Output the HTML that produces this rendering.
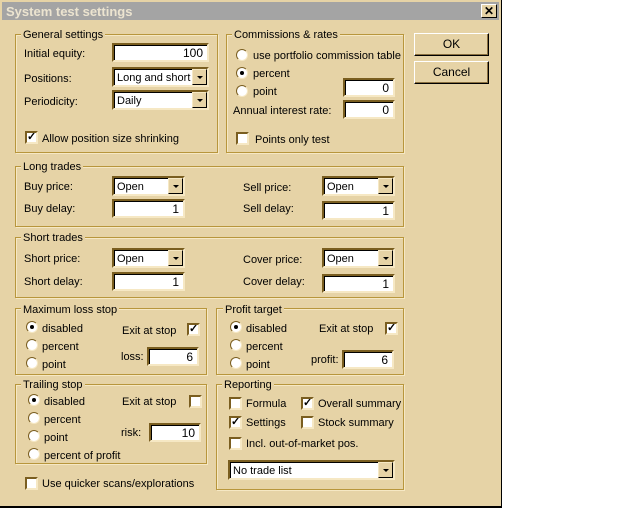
<!DOCTYPE html>
<html><head><style>
*{margin:0;padding:0;box-sizing:border-box}
body{width:640px;height:508px;background:#fff;position:relative;overflow:hidden;font-family:"Liberation Sans",sans-serif;font-size:11px;color:#000}
#win{position:absolute;left:0;top:0;width:502px;height:508px;background:#e6d3a6;border-right:1px solid #000;border-bottom:2px solid #000}
#title{position:absolute;left:2px;top:2px;width:497px;height:18px;background:#a4a4a4;color:#ece4d0;font-weight:bold;font-size:13px;padding:2px 0 0 4px}
#close{position:absolute;left:481px;top:4px;width:16px;height:14px;background:#e6d3a6;border:1px solid;border-color:#fff #000 #000 #fff;font-size:12px;font-weight:bold;text-align:center;line-height:12px}
.g{position:absolute;border:1px solid #b8963c;box-shadow:1px 1px 0 #f6e8c4, inset 1px 1px 0 #f6e8c4}
.gl{position:absolute;background:#e6d3a6;padding:1px 2px 0;line-height:14px}
.t{position:absolute;white-space:nowrap;line-height:14px;padding-top:1px}
.in{position:absolute;background:#fff;border:2px solid;border-color:#7a5e20 #f6e8c4 #f6e8c4 #7a5e20;box-shadow:inset 1px 1px 0 #000;text-align:right;padding-right:4px;line-height:14px;padding-top:1px;font-size:12px}
.cb{position:absolute;background:#fff;border:2px solid;border-color:#7a5e20 #f6e8c4 #f6e8c4 #7a5e20;box-shadow:inset 1px 1px 0 #000;padding-left:3px;line-height:14px;padding-top:2px;font-size:11px;white-space:nowrap;overflow:hidden}
.cb i{position:absolute;right:0;top:0;width:15px;height:100%;background:#e6d3a6;border:1px solid;border-color:#f6e8c4 #000 #000 #f6e8c4}
.cb i:after{content:"";position:absolute;left:4px;top:6px;border:3px solid transparent;border-top:3px solid #000;border-bottom:0}
.r{position:absolute;width:12px;height:12px;border-radius:50%;background:#fff;border:1px solid;border-color:#7a5e20 #f6e8c4 #f6e8c4 #7a5e20}
.r.on:after{content:"";position:absolute;left:3px;top:3px;width:4px;height:4px;border-radius:50%;background:#000}
.c{position:absolute;width:13px;height:13px;background:#fff;border:2px solid;border-color:#7a5e20 #f6e8c4 #f6e8c4 #7a5e20;font-size:11px;line-height:9px;text-align:center;font-weight:bold}
.b{position:absolute;width:75px;height:23px;border:1px solid;border-color:#fff #000 #000 #fff;box-shadow:inset -1px -1px 0 #8a7040;text-align:center;line-height:21px;font-size:12px}
</style></head><body>
<div id="win">
<div id="title">System test settings</div>
<div id="close">✕</div>

<div class="g" style="left:15px;top:34px;width:203px;height:119px"></div>
<div class="gl" style="left:21px;top:27px">General settings</div>
<div class="t" style="left:24px;top:46px">Initial equity:</div>
<div class="in" style="left:112px;top:43px;width:97px;height:19px">100</div>
<div class="t" style="left:24px;top:71px">Positions:</div>
<div class="cb" style="left:112px;top:67px;width:97px;height:20px">Long and short<i></i></div>
<div class="t" style="left:24px;top:94px">Periodicity:</div>
<div class="cb" style="left:112px;top:90px;width:97px;height:20px">Daily<i></i></div>
<div class="c" style="left:25px;top:131px">✓</div>
<div class="t" style="left:42px;top:131px">Allow position size shrinking</div>

<div class="g" style="left:226px;top:34px;width:178px;height:119px"></div>
<div class="gl" style="left:232px;top:27px">Commissions &amp; rates</div>
<div class="r" style="left:236px;top:49px"></div><div class="t" style="left:253px;top:48px">use portfolio commission table</div>
<div class="r on" style="left:236px;top:67px"></div><div class="t" style="left:253px;top:66px">percent</div>
<div class="r" style="left:236px;top:85px"></div><div class="t" style="left:253px;top:84px">point</div>
<div class="in" style="left:343px;top:78px;width:52px;height:19px">0</div>
<div class="t" style="left:233px;top:103px">Annual interest rate:</div>
<div class="in" style="left:343px;top:100px;width:52px;height:19px">0</div>
<div class="c" style="left:236px;top:132px"></div>
<div class="t" style="left:255px;top:132px">Points only test</div>

<div class="b" style="left:414px;top:33px">OK</div>
<div class="b" style="left:414px;top:61px">Cancel</div>

<div class="g" style="left:15px;top:166px;width:389px;height:61px"></div>
<div class="gl" style="left:21px;top:159px">Long trades</div>
<div class="t" style="left:24px;top:179px">Buy price:</div>
<div class="cb" style="left:112px;top:176px;width:73px;height:20px">Open<i></i></div>
<div class="t" style="left:243px;top:180px">Sell price:</div>
<div class="cb" style="left:322px;top:176px;width:73px;height:20px">Open<i></i></div>
<div class="t" style="left:24px;top:201px">Buy delay:</div>
<div class="in" style="left:112px;top:199px;width:73px;height:19px">1</div>
<div class="t" style="left:243px;top:201px">Sell delay:</div>
<div class="in" style="left:322px;top:201px;width:73px;height:19px">1</div>

<div class="g" style="left:15px;top:237px;width:389px;height:61px"></div>
<div class="gl" style="left:21px;top:230px">Short trades</div>
<div class="t" style="left:24px;top:251px">Short price:</div>
<div class="cb" style="left:112px;top:248px;width:73px;height:20px">Open<i></i></div>
<div class="t" style="left:243px;top:252px">Cover price:</div>
<div class="cb" style="left:322px;top:248px;width:73px;height:20px">Open<i></i></div>
<div class="t" style="left:24px;top:274px">Short delay:</div>
<div class="in" style="left:112px;top:272px;width:73px;height:19px">1</div>
<div class="t" style="left:243px;top:274px">Cover delay:</div>
<div class="in" style="left:322px;top:274px;width:73px;height:19px">1</div>

<div class="g" style="left:15px;top:308px;width:192px;height:67px"></div>
<div class="gl" style="left:21px;top:302px">Maximum loss stop</div>
<div class="r on" style="left:26px;top:321px"></div><div class="t" style="left:42px;top:321px">disabled</div>
<div class="r" style="left:26px;top:339px"></div><div class="t" style="left:42px;top:339px">percent</div>
<div class="r" style="left:26px;top:357px"></div><div class="t" style="left:42px;top:357px">point</div>
<div class="t" style="left:122px;top:323px">Exit at stop</div>
<div class="c" style="left:187px;top:323px">✓</div>
<div class="t" style="left:121px;top:349px">loss:</div>
<div class="in" style="left:147px;top:347px;width:52px;height:19px">6</div>

<div class="g" style="left:216px;top:308px;width:188px;height:67px"></div>
<div class="gl" style="left:223px;top:302px">Profit target</div>
<div class="r on" style="left:230px;top:321px"></div><div class="t" style="left:246px;top:321px">disabled</div>
<div class="r" style="left:230px;top:339px"></div><div class="t" style="left:246px;top:339px">percent</div>
<div class="r" style="left:230px;top:357px"></div><div class="t" style="left:246px;top:357px">point</div>
<div class="t" style="left:319px;top:321px">Exit at stop</div>
<div class="c" style="left:385px;top:322px">✓</div>
<div class="t" style="left:311px;top:352px">profit:</div>
<div class="in" style="left:342px;top:350px;width:52px;height:19px">6</div>

<div class="g" style="left:15px;top:384px;width:192px;height:80px"></div>
<div class="gl" style="left:21px;top:377px">Trailing stop</div>
<div class="r on" style="left:28px;top:394px"></div><div class="t" style="left:44px;top:394px">disabled</div>
<div class="r" style="left:28px;top:412px"></div><div class="t" style="left:44px;top:412px">percent</div>
<div class="r" style="left:28px;top:430px"></div><div class="t" style="left:44px;top:430px">point</div>
<div class="r" style="left:28px;top:448px"></div><div class="t" style="left:44px;top:448px">percent of profit</div>
<div class="t" style="left:122px;top:394px">Exit at stop</div>
<div class="c" style="left:189px;top:395px"></div>
<div class="t" style="left:121px;top:425px">risk:</div>
<div class="in" style="left:149px;top:423px;width:52px;height:19px">10</div>

<div class="g" style="left:216px;top:384px;width:188px;height:106px"></div>
<div class="gl" style="left:222px;top:377px">Reporting</div>
<div class="c" style="left:229px;top:397px"></div><div class="t" style="left:246px;top:396px">Formula</div>
<div class="c" style="left:301px;top:397px">✓</div><div class="t" style="left:318px;top:396px">Overall summary</div>
<div class="c" style="left:229px;top:416px">✓</div><div class="t" style="left:246px;top:415px">Settings</div>
<div class="c" style="left:301px;top:416px"></div><div class="t" style="left:318px;top:415px">Stock summary</div>
<div class="c" style="left:229px;top:437px"></div><div class="t" style="left:246px;top:436px">Incl. out-of-market pos.</div>
<div class="cb" style="left:228px;top:460px;width:167px;height:20px">No trade list<i></i></div>

<div class="c" style="left:25px;top:477px"></div>
<div class="t" style="left:42px;top:476px">Use quicker scans/explorations</div>
</div>
</body></html>
